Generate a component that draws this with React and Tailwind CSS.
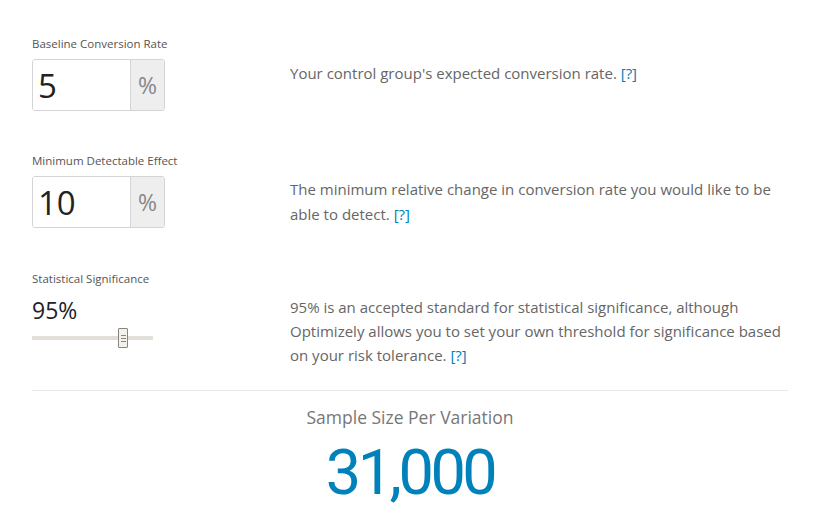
import React from "react";

const font = { fontFamily: '"Open Sans", "Liberation Sans", sans-serif' };

function Q() {
  return <a className="text-[#0081ba]">[?]</a>;
}

function NumInput({ value }) {
  return (
    <div className="flex w-[133px] h-[52px] border border-[#d4d4d4] rounded-[3px] overflow-hidden">
      <div className="flex-1 bg-white flex items-center pl-[5px] text-[33px] text-[#222] leading-none">{value}</div>
      <div className="w-[34px] bg-[#eeeeee] border-l border-[#d4d4d4] flex items-center justify-center text-[23px] text-[#888]">%</div>
    </div>
  );
}

export default function App() {
  return (
    <div className="w-[820px] h-[527px] bg-white overflow-hidden px-8 pt-[37px]" style={font}>
      <div className="grid grid-cols-[258px_1fr]">
        <div>
          <div className="text-[11.5px] text-[#555] leading-[14px] mb-[8px]">Baseline Conversion Rate</div>
          <NumInput value="5" />
        </div>
        <div className="pt-[24px] text-[15px] text-[#666] leading-[25px]">
          Your control group's expected conversion rate. <Q />
        </div>
      </div>

      <div className="grid grid-cols-[258px_1fr] mt-[43px]">
        <div>
          <div className="text-[11.5px] text-[#555] leading-[14px] mb-[8px]">Minimum Detectable Effect</div>
          <NumInput value="10" />
        </div>
        <div className="pt-[23px] text-[15px] text-[#666] leading-[25px] pr-[10px]">
          The minimum relative change in conversion rate you would like to be able to detect. <Q />
        </div>
      </div>

      <div className="grid grid-cols-[258px_1fr] mt-[44px]">
        <div>
          <div className="text-[11.5px] text-[#555] leading-[14px]">Statistical Significance</div>
          <div className="text-[23px] text-[#222] leading-[28px] mt-[10px]">95%</div>
          <div className="relative w-[121px] h-[20px] mt-[4px]">
            <div className="absolute left-0 right-0 top-[8px] h-[4px] bg-[#e2dfd8]" />
            <div className="absolute left-[86px] top-0 w-[10px] h-[20px] border border-[#8a857c] bg-[#f3f1ec] rounded-[1px] flex flex-col items-center justify-center gap-[2px]">
              <div className="w-[5px] h-px bg-[#8a857c]" />
              <div className="w-[5px] h-px bg-[#8a857c]" />
              <div className="w-[5px] h-px bg-[#8a857c]" />
            </div>
          </div>
        </div>
        <div className="pt-[23px] text-[15px] text-[#666] leading-[24px] -mr-[6px]">
          95% is an accepted standard for statistical significance, although Optimizely allows you to set your own threshold for significance based on your risk tolerance. <Q />
        </div>
      </div>

      <div className="border-t border-[#e8e8e8] mt-[23px]" />
      <div className="text-center text-[17.5px] text-[#777] mt-[14px] leading-[24px]">Sample Size Per Variation</div>
      <div className="text-center text-[63px] text-[#0081ba] leading-none mt-[12px] tracking-[-3.5px]" style={{ fontFamily: 'Roboto, "Open Sans", sans-serif' }}>31,000</div>
    </div>
  );
}
